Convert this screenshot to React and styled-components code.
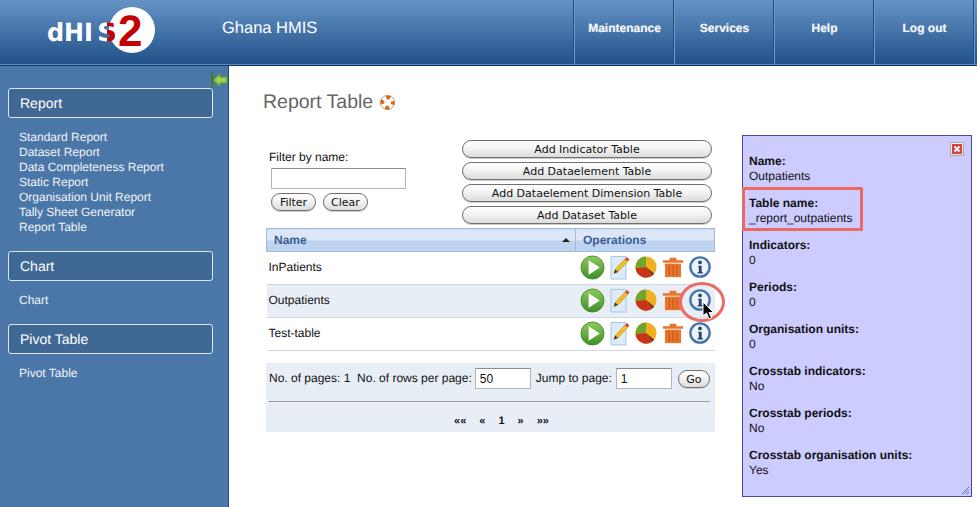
import React from 'react';
import styled, { createGlobalStyle } from 'styled-components';

const GlobalStyle = createGlobalStyle`
  html, body { margin: 0; padding: 0; background: #fff; }
  body {
    font-family: "Liberation Sans", Arial, sans-serif;
    text-rendering: geometricPrecision;
  }
`;

const Page = styled.div`
  width: 977px;
  height: 507px;
  overflow: hidden;
  position: relative;
  display: flex;
  flex-direction: column;
`;

const Header = styled.header`
  height: 66px;
  flex: none;
  box-sizing: border-box;
  display: flex;
  background: linear-gradient(#6593c6, #205088);
  border-bottom: 1px solid #0f3a68;
  box-shadow: inset 0 -1px 0 #5e8cc0;
`;

const LogoBox = styled.div`
  width: 222px;
  flex: none;
  padding: 6px 0 0 45px;
  box-sizing: border-box;
`;

const Instance = styled.div`
  flex: 1;
  color: #fff;
  font-size: 16.5px;
  line-height: 56px;
`;

const NavItem = styled.div`
  width: ${(p) => p.$width || 100}px;
  box-sizing: border-box;
  border-left: 1px solid #6f98c6;
  box-shadow: -1px 0 0 #23507f;
  margin-bottom: 1px;
  color: #f4f6fa;
  font-size: 12px;
  font-weight: bold;
  line-height: 56px;
  text-align: center;
  text-shadow: 0 0 1px rgba(255, 255, 255, 0.5);
`;

const Body = styled.div`
  flex: 1;
  display: flex;
  min-height: 0;
`;

const Sidebar = styled.aside`
  width: 229px;
  flex: none;
  box-sizing: border-box;
  position: relative;
  background: #4a76a8;
  border-right: 1px solid #234a75;
  padding: 22px 15px 0 8px;
`;

const Collapse = styled.svg`
  position: absolute;
  right: 0;
  top: 6px;
`;

const SectionHead = styled.div`
  height: 30px;
  box-sizing: border-box;
  background: #3f6895;
  border: 1px solid #dde7f2;
  border-radius: 3px;
  color: #fff;
  font-size: 14px;
  line-height: 29px;
  padding-left: 11px;
`;

const LinkList = styled.ul`
  list-style: none;
  margin: 0;
  padding: 12px 0 ${(p) => p.$bottom}px 11px;
`;

const LinkItem = styled.li`
  color: #f2f5f9;
  font-size: 12px;
  line-height: 15px;
`;

const Main = styled.main`
  flex: 1;
  display: flex;
  min-width: 0;
`;

const LeftColumn = styled.div`
  width: 449px;
  flex: none;
  margin-left: 37px;
`;

const Title = styled.h1`
  margin: 25px 0 0 -3px;
  height: 22px;
  display: flex;
  align-items: center;
  gap: 7px;
  color: #666;
  font-size: 19.5px;
  font-weight: normal;
`;

const Toolbar = styled.div`
  display: flex;
  justify-content: space-between;
  margin-top: 23px;
  height: 92px;
  padding-right: 3px;
`;

const FilterBox = styled.div`
  padding: 14px 0 0 3px;
`;

const FilterLabel = styled.div`
  font-size: 12px;
  line-height: 15px;
  color: #111;
`;

const TextInput = styled.input`
  display: block;
  flex: none;
  box-sizing: border-box;
  background: #fff;
  border: 1px solid #b5b5b5;
  border-top-color: #8c8c8c;
  padding: 0 4px;
  font: 12px "Liberation Sans", Arial, sans-serif;
  color: #111;
  width: ${(p) => p.$width}px;
  height: ${(p) => p.$height}px;
`;

const FilterInput = styled(TextInput)`
  margin: 3px 0 4px 2px;
`;

const ButtonRow = styled.div`
  display: flex;
  gap: 7px;
  padding-left: 2px;
`;

const Pill = styled.button`
  display: block;
  flex: none;
  box-sizing: border-box;
  height: 18px;
  padding: 0;
  width: ${(p) => p.$width}px;
  border: 1px solid #707070;
  border-radius: 9px;
  background: linear-gradient(#fff, #f3f3f3 45%, #dcdcdc);
  color: #111;
  font: 11px/15px "DejaVu Sans", Verdana, sans-serif;
  box-shadow: 0 1px 0 #ccc;
`;

const AddButtons = styled.div`
  display: flex;
  flex-direction: column;
  gap: 4px;
  padding-top: 4px;
`;

const Table = styled.table`
  width: 448px;
  border-collapse: collapse;
  table-layout: fixed;
  font-size: 12px;
  color: #111;
`;

const HeadCell = styled.th`
  position: relative;
  height: 22px;
  padding: 0 0 0 ${(p) => p.$pad}px;
  text-align: left;
  color: #3c5d92;
  font-size: 12px;
  font-weight: bold;
  background: linear-gradient(#dbe7f6 50%, #bdd3ef 50%);
  border: 1px solid #9dbbdc;
`;

const SortMark = styled.span`
  position: absolute;
  right: 5px;
  top: 9px;
  width: 0;
  height: 0;
  border-left: 4px solid transparent;
  border-right: 4px solid transparent;
  border-bottom: 4px solid #222;
`;

const Row = styled.tr`
  background: ${(p) => (p.$alt ? '#e8eef6' : '#fff')};
  border-bottom: 1px solid #cfd8e4;
`;

const NameCell = styled.td`
  height: 30px;
  padding: 0 0 2px 2px;
`;

const OpsCell = styled.td`
  padding: 0 0 2px;
`;

const Ops = styled.div`
  display: flex;
  align-items: center;
  gap: 5px;
  padding-left: 4px;
  svg { display: block; flex: none; }
`;

const Pager = styled.div`
  margin-top: 12px;
  height: 69px;
  background: #e8eef6;
  padding: 5px 5px 0 3px;
  box-sizing: border-box;
  font-size: 12px;
  color: #111;
`;

const PagerRow = styled.div`
  display: flex;
  align-items: flex-start;
  height: 21px;
  line-height: 21px;
  padding-bottom: 12px;
  border-bottom: 1px solid #999;
  white-space: nowrap;
`;

const PagerInput = styled(TextInput)`
  margin: 0 5px 0 3px;
`;

const GoButton = styled(Pill)`
  margin: 2px 0 0 1px;
`;

const JumpLabel = styled.span`
  margin-right: 1px;
`;

const PageLinks = styled.div`
  display: flex;
  justify-content: center;
  gap: 13px;
  margin-top: 12px;
  padding-left: 24px;
  font-size: 11px;
  font-weight: bold;
  line-height: 14px;
`;

const InfoPanel = styled.section`
  position: relative;
  width: 230px;
  height: 362px;
  box-sizing: border-box;
  margin: 69px 0 0 27px;
  background: #ccccff;
  border: 1px solid #4646b4;
  padding: 18px 0 0 6px;
  font-size: 12px;
  line-height: 15px;
  color: #111;
`;

const InfoGroup = styled.div`
  margin-bottom: 12px;
`;

const InfoLabel = styled.div`
  font-weight: bold;
`;

const CloseBox = styled.span`
  position: absolute;
  top: 6px;
  right: 7px;
  width: 14px;
  height: 14px;
  box-sizing: border-box;
  border: 1px solid #aaa;
  background: linear-gradient(#f6f6f6, #ddd);
  display: flex;
  align-items: center;
  justify-content: center;
`;

const Grip = styled.svg`
  position: absolute;
  right: 1px;
  bottom: 1px;
`;

const HighlightBox = styled.div`
  position: absolute;
  left: 742px;
  top: 187px;
  width: 121px;
  height: 44px;
  border: 3px solid #ea6a63;
  border-radius: 1px;
  box-sizing: border-box;
`;

const HighlightRing = styled.div`
  position: absolute;
  left: 679px;
  top: 282px;
  width: 46px;
  height: 40px;
  border: 3px solid #ec6b64;
  border-radius: 50%;
  box-sizing: border-box;
`;

const Cursor = styled.svg`
  position: absolute;
  left: 702px;
  top: 301px;
`;

const Logo = () => (
  <svg width="115" height="50" viewBox="0 0 115 50">
    <defs>
      <linearGradient id="logoEss" gradientUnits="userSpaceOnUse" x1="52" y1="0" x2="72" y2="0">
        <stop offset="0.5" stopColor="#fff" />
        <stop offset="0.5" stopColor="#c40000" />
      </linearGradient>
    </defs>
    <circle cx="87" cy="24" r="23" fill="#fff" />
    <text x="2" y="35" fontFamily="'DejaVu Sans', sans-serif" fontSize="25" fontWeight="bold" fill="#fff" textLength="46" lengthAdjust="spacingAndGlyphs">dHI</text>
    <text x="52" y="35" fontFamily="'DejaVu Sans', sans-serif" fontSize="25" fontWeight="bold" fill="url(#logoEss)" textLength="20" lengthAdjust="spacingAndGlyphs">S</text>
    <text x="73" y="40" fontFamily="'Liberation Sans', sans-serif" fontSize="44" fontWeight="bold" fill="#c40000">2</text>
  </svg>
);

const CollapseArrow = () => (
  <Collapse width="17" height="16" viewBox="0 0 17 16">
    <rect x="0" y="0" width="2" height="16" fill="#3f7a25" />
    <path d="M2.500 8 L9 1.500 V5 H16 V11 H9 V14.500 Z" fill="#9bd04a" stroke="#5a9a2a" />
  </Collapse>
);

const LifeRing = () => (
  <svg width="15" height="15" viewBox="0 0 16 16">
    <circle cx="8" cy="8" r="5.500" fill="none" stroke="#fff" strokeWidth="4" />
    <circle cx="8" cy="8" r="5.500" fill="none" stroke="#dd6a1e" strokeWidth="4" strokeDasharray="4.300 4.340" strokeDashoffset="2.100" />
    <circle cx="8" cy="8" r="7.500" fill="none" stroke="#a86a3a" strokeWidth="0.700" />
  </svg>
);

const PlayIcon = () => (
  <svg width="25" height="25" viewBox="0 0 26 26">
    <defs>
      <linearGradient id="playFill" x1="0" y1="0" x2="0" y2="1">
        <stop offset="0" stopColor="#8fcb5a" />
        <stop offset="1" stopColor="#3f8f2c" />
      </linearGradient>
    </defs>
    <circle cx="13" cy="13" r="12" fill="url(#playFill)" stroke="#4a8f32" />
    <path d="M9 5.500 L20.500 13 L9 20.500 Z" fill="#fff" />
  </svg>
);

const EditIcon = () => (
  <svg width="20" height="25" viewBox="0 0 20 25">
    <path d="M1 1.500 H16 V24 H1 Z" fill="#dceafa" stroke="#a9c6e8" />
    <path d="M4 18.500 L5.200 14.500 L15 4 L17.500 6.500 L7.800 17 Z" fill="#f2c21a" stroke="#b98a10" strokeWidth="0.600" />
    <path d="M4 18.500 L5.200 14.500 L7.800 17 Z" fill="#333" />
    <path d="M15 4 L17 2 L19.500 4.500 L17.500 6.500 Z" fill="#d9434a" />
  </svg>
);

const PieIcon = () => (
  <svg width="22" height="24" viewBox="0 0 24 26">
    <circle cx="12" cy="13" r="11.500" fill="#f0b020" />
    <path d="M12 13 L12 1.500 A11.500 11.500 0 0 0 0.600 14 Z" fill="#6ea52e" />
    <path d="M12 13 L0.600 14 A11.500 11.500 0 0 0 18 23 Z" fill="#c8361a" />
    <path d="M12 13 L18 23 A11.500 11.500 0 0 0 21 20 Z" fill="#8e3416" />
  </svg>
);

const TrashIcon = () => (
  <svg width="22" height="24" viewBox="0 0 26 26">
    <path d="M1 5 H25 V8 H1 Z M9 2 H17 V5 H9 Z" fill="#e9752c" />
    <path d="M3.500 9 H22.500 V25 H3.500 Z" fill="#e9752c" />
    <path d="M8.500 11 V23 M13 11 V23 M17.500 11 V23" stroke="#c9581a" strokeWidth="1.400" />
  </svg>
);

const InfoIcon = () => (
  <svg width="22" height="22" viewBox="0 0 24 24">
    <circle cx="12" cy="12" r="10.500" fill="#eef3f9" stroke="#4473ac" strokeWidth="2.600" />
    <circle cx="12" cy="7" r="2" fill="#24466f" />
    <path d="M10 10.500 H13.800 V17.500 H15 V19 H9.500 V17.500 H10.700 V12 H10 Z" fill="#24466f" />
  </svg>
);

const sidebar = [
  {
    title: 'Report',
    bottom: 16,
    links: ['Standard Report', 'Dataset Report', 'Data Completeness Report', 'Static Report', 'Organisation Unit Report', 'Tally Sheet Generator', 'Report Table'],
  },
  { title: 'Chart', bottom: 16, links: ['Chart'] },
  { title: 'Pivot Table', bottom: 0, links: ['Pivot Table'] },
];

const info = [
  ['Name:', 'Outpatients'],
  ['Table name:', '_report_outpatients'],
  ['Indicators:', '0'],
  ['Periods:', '0'],
  ['Organisation units:', '0'],
  ['Crosstab indicators:', 'No'],
  ['Crosstab periods:', 'No'],
  ['Crosstab organisation units:', 'Yes'],
];

const rows = ['InPatients', 'Outpatients', 'Test-table'];

export default function App() {
  return (
    <Page>
      <GlobalStyle />
      <Header>
        <LogoBox><Logo /></LogoBox>
        <Instance>Ghana HMIS</Instance>
        {['Maintenance', 'Services', 'Help', 'Log out'].map((label) => (
          <NavItem key={label}>{label}</NavItem>
        ))}
        <NavItem $width={3} />
      </Header>
      <Body>
        <Sidebar>
          <CollapseArrow />
          {sidebar.map((section) => (
            <div key={section.title}>
              <SectionHead>{section.title}</SectionHead>
              <LinkList $bottom={section.bottom}>
                {section.links.map((link) => (
                  <LinkItem key={link}>{link}</LinkItem>
                ))}
              </LinkList>
            </div>
          ))}
        </Sidebar>
        <Main>
          <LeftColumn>
            <Title>Report Table <LifeRing /></Title>
            <Toolbar>
              <FilterBox>
                <FilterLabel>Filter by name:</FilterLabel>
                <FilterInput $width={135} $height={21} />
                <ButtonRow>
                  <Pill $width={45}>Filter</Pill>
                  <Pill $width={45}>Clear</Pill>
                </ButtonRow>
              </FilterBox>
              <AddButtons>
                <Pill $width={250}>Add Indicator Table</Pill>
                <Pill $width={250}>Add Dataelement Table</Pill>
                <Pill $width={250}>Add Dataelement Dimension Table</Pill>
                <Pill $width={250}>Add Dataset Table</Pill>
              </AddButtons>
            </Toolbar>
            <Table>
              <colgroup>
                <col width="309" />
                <col width="139" />
              </colgroup>
              <thead>
                <tr>
                  <HeadCell $pad={7}>Name<SortMark /></HeadCell>
                  <HeadCell $pad={7}>Operations</HeadCell>
                </tr>
              </thead>
              <tbody>
                {rows.map((name, i) => (
                  <Row key={name} $alt={i === 1}>
                    <NameCell>{name}</NameCell>
                    <OpsCell>
                      <Ops>
                        <PlayIcon />
                        <EditIcon />
                        <PieIcon />
                        <TrashIcon />
                        <InfoIcon />
                      </Ops>
                    </OpsCell>
                  </Row>
                ))}
              </tbody>
            </Table>
            <Pager>
              <PagerRow>
                No. of pages: 1&nbsp; No. of rows per page:
                <PagerInput $width={56} $height={21} defaultValue="50" />
                <JumpLabel>Jump to page:</JumpLabel>
                <PagerInput $width={56} $height={21} defaultValue="1" />
                <GoButton $width={32}>Go</GoButton>
              </PagerRow>
              <PageLinks>
                <span>««</span>
                <span>«</span>
                <span>1</span>
                <span>»</span>
                <span>»»</span>
              </PageLinks>
            </Pager>
          </LeftColumn>
          <InfoPanel>
            <CloseBox>
              <svg width="10" height="10" viewBox="0 0 10 10">
                <rect width="10" height="10" fill="#d8433f" />
                <path d="M2.500 2.500 L7.500 7.500 M7.500 2.500 L2.500 7.500" stroke="#fff" strokeWidth="1.800" />
              </svg>
            </CloseBox>
            {info.map(([label, value]) => (
              <InfoGroup key={label}>
                <InfoLabel>{label}</InfoLabel>
                <div>{value}</div>
              </InfoGroup>
            ))}
            <Grip width="9" height="9" viewBox="0 0 9 9">
              <path d="M8 1 L1 8 M8 3.500 L3.500 8 M8 6 L6 8" stroke="#5d76c8" strokeWidth="1" />
            </Grip>
          </InfoPanel>
        </Main>
      </Body>
      <HighlightBox />
      <HighlightRing />
      <Cursor width="14" height="20" viewBox="0 0 14 20">
        <path d="M1 1 V15 L4.500 12 L7 18 L9.500 17 L7 11.500 H11.500 Z" fill="#000" stroke="#fff" strokeWidth="1" />
      </Cursor>
    </Page>
  );
}
